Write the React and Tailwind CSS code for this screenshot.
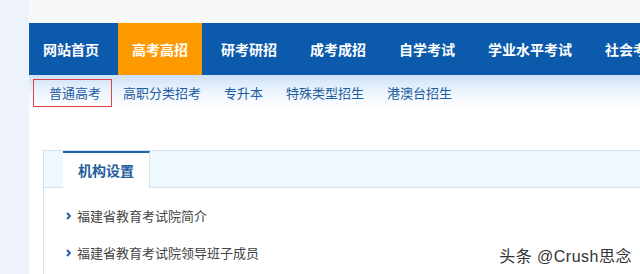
import { useState } from 'react';

const mainNav = ['网站首页', '高考高招', '研考研招', '成考成招', '自学考试', '学业水平考试', '社会考试'];
const subNav = ['普通高考', '高职分类招考', '专升本', '特殊类型招生', '港澳台招生'];
const items = ['福建省教育考试院简介', '福建省教育考试院领导班子成员'];

function App() {
  const [active] = useState(1);

  return (
    <div
      className="relative flex h-[274px] w-[640px] overflow-hidden bg-white"
      style={{ fontFamily: '"Microsoft YaHei", "Noto Sans CJK SC", sans-serif' }}
    >
      {/* gutter */}
      <div className="w-[29px] shrink-0 bg-[#eef3fb]" />

      <div className="flex min-w-0 flex-1 flex-col">
        <div className="h-[23px] shrink-0 bg-[#f7f8fa]" />

        {/* main nav */}
        <nav className="flex h-[52px] shrink-0 gap-[5px] bg-[#0b5aab] whitespace-nowrap">
          {mainNav.map((t, i) => (
            <a
              key={t}
              className={`flex items-center px-[14px] text-[14px] font-bold text-white ${
                i === active ? 'bg-[#fe9900]' : ''
              }`}
            >
              {t}
            </a>
          ))}
        </nav>

        {/* sub nav */}
        <div className="flex h-[35px] shrink-0 items-center gap-[23px] bg-gradient-to-b from-[#cde2f7] via-[#eef5fd] to-white pl-[4px] whitespace-nowrap">
          {subNav.map((t, i) => (
            <a
              key={t}
              className={`text-[13px] text-[#1d5c9e] ${
                i === 0 ? 'flex h-[28px] items-center border border-[#e0454a] pl-[15px] pr-[10px] -mr-[12px]' : ''
              }`}
            >
              {t}
            </a>
          ))}
        </div>

        {/* panel */}
        <div className="ml-[14px] mt-[40px] flex-1 border-l border-t border-[#d3e3f0]">
          <div className="flex h-[37px] border-b border-[#d3e3f0] bg-[#eef8fd] pl-[19px]">
            <div className="flex w-[87px] items-center justify-center border-t-2 border-r border-t-[#1c63ad] border-r-[#d3e3f0] bg-white text-[14px] font-bold text-[#1d5c9e] -mb-px">
              机构设置
            </div>
          </div>
          <ul className="pl-[22px] pt-[9px]">
            {items.map((t) => (
              <li key={t} className="flex h-[37px] items-center gap-[5px] text-[13px] text-[#444]">
                <svg width="6" height="8" viewBox="0 0 6 8" className="shrink-0">
                  <path d="M1 1l3 3-3 3" stroke="#1a5a9f" strokeWidth="1.8" fill="none" />
                </svg>
                {t}
              </li>
            ))}
          </ul>
        </div>
      </div>

      {/* watermark */}
      <div
        className="absolute bottom-[5px] right-[8px] text-[16px] tracking-[0.5px] text-[#333]"
        style={{
          fontFamily: '"Liberation Sans", "Noto Sans CJK SC", sans-serif',
          textShadow: '0 0 2px #fff, 0 0 2px #fff',
        }}
      >
        头条 @Crush思念
      </div>
    </div>
  );
}

export default App;
